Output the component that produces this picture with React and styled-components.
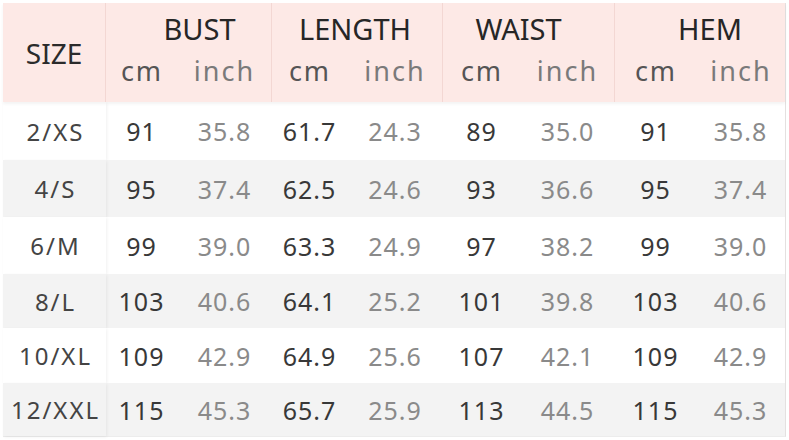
import React from "react";
import styled, { createGlobalStyle } from "styled-components";

const GlobalStyle = createGlobalStyle`
  body {
    margin: 0;
    background: #ffffff;
    font-family: "Noto Sans", "Open Sans", sans-serif;
  }
`;

const Page = styled.div`
  width: 789px;
  height: 440px;
  padding: 3px 0 0 3px;
  box-sizing: border-box;
  background: #ffffff;
  overflow: hidden;
`;

const Chart = styled.div`
  width: 782px;
  display: flex;
  flex-direction: column;
  border-right: 1px solid #e4e0e0;
  border-bottom: 1px solid #ececec;
`;

const HeaderRow = styled.div`
  display: flex;
  height: 99px;
  background: #fde9e6;
  box-shadow: 0 2px 3px rgba(0, 0, 0, 0.05);
  position: relative;
  z-index: 1;
`;

const SizeHead = styled.div`
  width: 103px;
  box-sizing: border-box;
  display: flex;
  align-items: center;
  justify-content: center;
  font-size: 28px;
  color: #2b2b2b;
  border-right: 1px solid #f3d7d3;
`;

const GroupHead = styled.div`
  width: ${(p) => p.$width}px;
  box-sizing: border-box;
  display: flex;
  flex-direction: column;
  border-right: ${(p) => (p.$last ? "none" : "1px solid #f3d7d3")};
`;

const Title = styled.div`
  height: 36px;
  line-height: 36px;
  margin-top: 8px;
  text-align: center;
  font-size: 29px;
  color: #262626;
  padding-left: ${(p) => Math.max(0, p.$shift * 2)}px;
  padding-right: ${(p) => Math.max(0, -p.$shift * 2)}px;
`;

const UnitRow = styled.div`
  display: flex;
  margin-top: 9px;
`;

const Unit = styled.div`
  width: ${(p) => p.$width}px;
  flex: ${(p) => (p.$fill ? "1" : "none")};
  height: 30px;
  line-height: 30px;
  text-align: center;
  padding-left: 2px;
  box-sizing: border-box;
  font-size: 27px;
  letter-spacing: 2px;
  color: ${(p) => (p.$light ? "#7a7a7a" : "#555555")};
`;

const Row = styled.div`
  display: flex;
  height: ${(p) => p.$height}px;
  background: ${(p) => (p.$alt ? "#f3f3f3" : "#ffffff")};
`;

const SizeCell = styled.div`
  width: 103px;
  display: flex;
  align-items: center;
  justify-content: center;
  padding-left: 2px;
  box-sizing: border-box;
  font-size: 24px;
  letter-spacing: 2px;
  color: #444444;
  box-shadow: 1px 1px 3px rgba(0, 0, 0, 0.06);
`;

const ValueCell = styled.div`
  width: ${(p) => p.$width}px;
  display: flex;
  align-items: center;
  justify-content: center;
  padding-left: 1px;
  box-sizing: border-box;
  font-size: 25px;
  letter-spacing: 1px;
  color: ${(p) => (p.$light ? "#8a8a8a" : "#383838")};
`;

const groups = [
  { title: "BUST", shift: 11, cols: [70, 96] },
  { title: "LENGTH", shift: -2, cols: [74, 97] },
  { title: "WAIST", shift: -10, cols: [76, 96] },
  { title: "HEM", shift: 10, cols: [80, 90] },
];

const rows = [
  { size: "2/XS", h: 58, v: ["91", "35.8", "61.7", "24.3", "89", "35.0", "91", "35.8"] },
  { size: "4/S", h: 57, v: ["95", "37.4", "62.5", "24.6", "93", "36.6", "95", "37.4"] },
  { size: "6/M", h: 57, v: ["99", "39.0", "63.3", "24.9", "97", "38.2", "99", "39.0"] },
  { size: "8/L", h: 54, v: ["103", "40.6", "64.1", "25.2", "101", "39.8", "103", "40.6"] },
  { size: "10/XL", h: 55, v: ["109", "42.9", "64.9", "25.6", "107", "42.1", "109", "42.9"] },
  { size: "12/XXL", h: 53, v: ["115", "45.3", "65.7", "25.9", "113", "44.5", "115", "45.3"] },
];

const colWidths = groups.flatMap((g) => g.cols);

const App = () => {
  return (
    <>
      <GlobalStyle />
      <Page>
        <Chart>
          <HeaderRow>
            <SizeHead>SIZE</SizeHead>
            {groups.map((g, i) => (
              <GroupHead
                key={g.title}
                $width={g.cols[0] + g.cols[1]}
                $last={i === groups.length - 1}
              >
                <Title $shift={g.shift}>{g.title}</Title>
                <UnitRow>
                  <Unit $width={g.cols[0]}>cm</Unit>
                  <Unit $fill $light>
                    inch
                  </Unit>
                </UnitRow>
              </GroupHead>
            ))}
          </HeaderRow>
          {rows.map((r, i) => (
            <Row key={r.size} $height={r.h} $alt={i % 2 === 1}>
              <SizeCell>{r.size}</SizeCell>
              {r.v.map((val, j) => (
                <ValueCell key={j} $width={colWidths[j]} $light={j % 2 === 1}>
                  {val}
                </ValueCell>
              ))}
            </Row>
          ))}
        </Chart>
      </Page>
    </>
  );
};

export default App;
